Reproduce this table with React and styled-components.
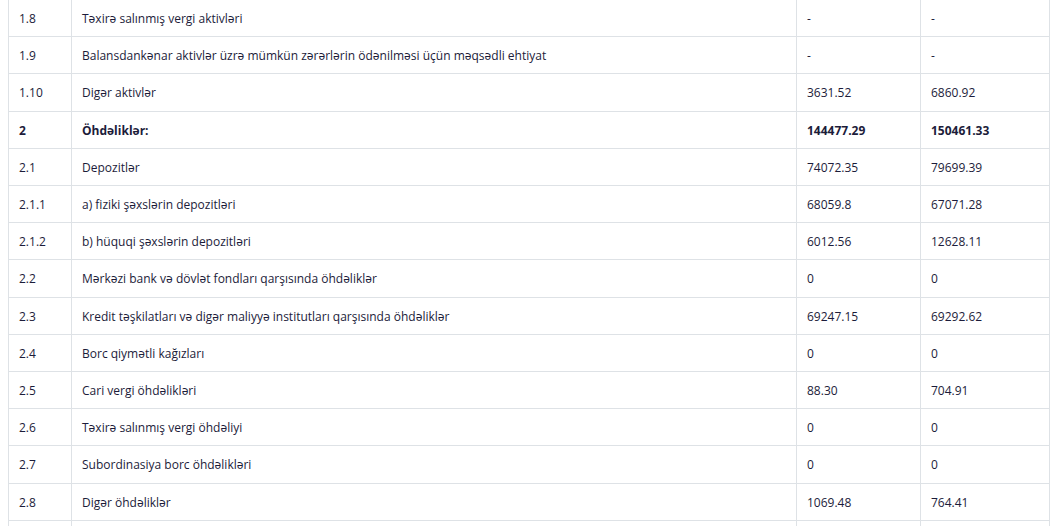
import styled, { createGlobalStyle } from 'styled-components';

const GlobalStyle = createGlobalStyle`
    body {
        margin: 0 8px;
        background: #ffffff;
        font-family: 'Open Sans', 'Noto Sans', sans-serif;
        color: #1c1c3a;
    }
`;

const Table = styled.table`
    width: 100%;
    border-collapse: collapse;
    table-layout: fixed;
    border-left: 1px solid #dee2e6;
    border-right: 1px solid #dee2e6;
`;

const Row = styled.tr`
    border-bottom: 1px solid #dee2e6;
`;

const Cell = styled.td`
    height: 18.2px;
    padding: 10px 10px 8px;
    font-size: 12px;
    line-height: 18.2px;
    font-weight: ${({ $bold }) => ($bold ? 700 : 400)};
    border-right: 1px solid #dee2e6;
    white-space: nowrap;
    vertical-align: middle;
    &:last-child {
        border-right: none;
    }
`;

const rows = [
    ['1.8', 'Təxirə salınmış vergi aktivləri', '-', '-'],
    ['1.9', 'Balansdankənar aktivlər üzrə mümkün zərərlərin ödənilməsi üçün məqsədli ehtiyat', '-', '-'],
    ['1.10', 'Digər aktivlər', '3631.52', '6860.92'],
    ['2', 'Öhdəliklər:', '144477.29', '150461.33', true],
    ['2.1', 'Depozitlər', '74072.35', '79699.39'],
    ['2.1.1', 'a) fiziki şəxslərin depozitləri', '68059.8', '67071.28'],
    ['2.1.2', 'b) hüquqi şəxslərin depozitləri', '6012.56', '12628.11'],
    ['2.2', 'Mərkəzi bank və dövlət fondları qarşısında öhdəliklər', '0', '0'],
    ['2.3', 'Kredit təşkilatları və digər maliyyə institutları qarşısında öhdəliklər', '69247.15', '69292.62'],
    ['2.4', 'Borc qiymətli kağızları', '0', '0'],
    ['2.5', 'Cari vergi öhdəlikləri', '88.30', '704.91'],
    ['2.6', 'Təxirə salınmış vergi öhdəliyi', '0', '0'],
    ['2.7', 'Subordinasiya borc öhdəlikləri', '0', '0'],
    ['2.8', 'Digər öhdəliklər', '1069.48', '764.41'],
];

const App = () => (
    <>
        <GlobalStyle />
        <Table>
            <colgroup>
                <col style={{ width: 63 }} />
                <col style={{ width: 725 }} />
                <col style={{ width: 124 }} />
                <col />
            </colgroup>
            <tbody>
                {rows.map(([num, label, prev, cur, bold]) => (
                    <Row key={num}>
                        <Cell $bold={bold}>{num}</Cell>
                        <Cell $bold={bold}>{label}</Cell>
                        <Cell $bold={bold}>{prev}</Cell>
                        <Cell $bold={bold}>{cur}</Cell>
                    </Row>
                ))}
                <Row>
                    <Cell />
                    <Cell />
                    <Cell />
                    <Cell />
                </Row>
            </tbody>
        </Table>
    </>
);

export default App;
